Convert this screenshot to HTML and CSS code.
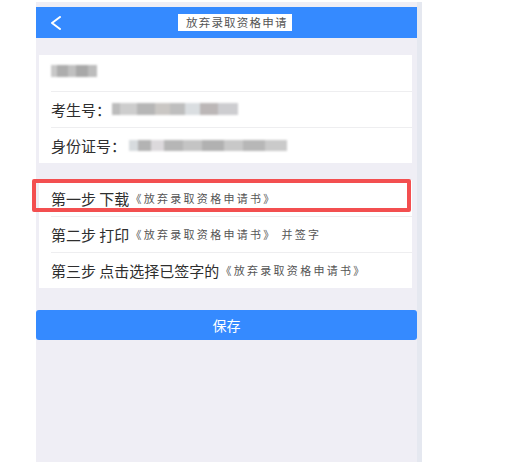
FILE: index.html
```html
<!DOCTYPE html>
<html lang="zh-CN">
<head>
<meta charset="utf-8">
<title>放弃录取资格申请</title>
<link rel="stylesheet" href="styles.css">
</head>
<body>
<div class="phone">
  <div class="screen">
    <header class="topbar">
      <span class="back">
        <svg width="12" height="14" viewBox="0 0 12 14"><path d="M10 1 L2 7 L10 13" fill="none" stroke="#fff" stroke-width="2" stroke-linecap="round" stroke-linejoin="round"/></svg>
      </span>
      <span class="title">放弃录取资格申请</span>
    </header>

    <section class="card">
      <div class="row"><span class="mosaic mosaic-name"></span></div>
      <div class="row"><span class="label">考生号：</span><span class="mosaic mosaic-no"></span></div>
      <div class="row"><span class="label">身份证号：</span><span class="mosaic mosaic-id"></span></div>
    </section>

    <section class="card steps">
      <div class="row"><span class="label">第一步 下载</span><span class="book">《放弃录取资格申请书》</span></div>
      <div class="row"><span class="label">第二步 打印</span><span class="book">《放弃录取资格申请书》 并签字</span></div>
      <div class="row"><span class="label">第三步 点击选择已签字的</span><span class="book">《放弃录取资格申请书》</span></div>
      <div class="highlight"></div>
    </section>

    <button class="save">保存</button>
  </div>
  <div class="strip"></div>
</div>
</body>
</html>
```

FILE: styles.css
```css
html, body {
  margin: 0;
  padding: 0;
  background: #ffffff;
}

body {
  font-family: "Noto Sans CJK SC", "Noto Sans", sans-serif;
  color: #333;
}

.phone {
  display: flex;
  margin: 2px 0 0 36px;
  width: 386px;
  height: 460px;
  background: #efeef5;
}

.screen {
  width: 381px;
  display: flex;
  flex-direction: column;
  padding-top: 5px;
}

.strip {
  width: 5px;
  background: #e5e8f0;
}

.topbar {
  height: 31px;
  background: #358aff;
  display: flex;
  align-items: center;
}

.back {
  display: flex;
  align-items: center;
  padding-left: 14px;
  width: 12px;
  height: 14px;
  margin-top: 1px;
}

.title {
  margin-left: 116px;
  background: #fff;
  height: 17px;
  width: 114px;
  box-sizing: border-box;
  padding-left: 8px;
  font-size: 11.5px;
  line-height: 17px;
  letter-spacing: 1.2px;
  color: #555;
  white-space: nowrap;
}

.card {
  margin: 17px 5px 0 3px;
  background: #fff;
  display: flex;
  flex-direction: column;
}

.row {
  height: 36px;
  display: flex;
  align-items: center;
  padding-left: 12px;
  position: relative;
  font-size: 15px;
  white-space: nowrap;
}

.row + .row::before {
  content: "";
  position: absolute;
  left: 12px;
  right: 0;
  top: 0;
  height: 1px;
  background: #eeeef0;
}

.label {
  color: #2e2e2e;
}

.mosaic {
  display: inline-block;
  height: 12px;
  filter: blur(1px);
}

.mosaic-name {
  width: 46px;
  margin-top: -4px;
  background: linear-gradient(90deg, #c8c8c8 0 12%, #adadad 12% 36%, #c0c0c0 36% 55%, #a8a8a8 55% 80%, #bcbcbc 80% 100%);
}

.mosaic-no {
  width: 126px;
  margin-left: 1px;
  background: linear-gradient(90deg, #bcbcbc 0 6%, #cdcdcd 6% 20%, #b6b6b6 20% 34%, #cac7c4 34% 46%, #bebebe 46% 58%, #dadee1 58% 70%, #bcb7b7 70% 84%, #cdcdd0 84% 100%);
}

.mosaic-id {
  width: 158px;
  margin-left: 3px;
  height: 11px;
  background: linear-gradient(90deg, #d7dbde 0 6%, #b3b3b3 6% 14%, #dcd9dc 14% 22%, #b6b6b6 22% 34%, #c4c4c4 34% 46%, #b1b1b1 46% 60%, #c8c8c8 60% 72%, #b7b7b7 72% 86%, #cacaca 86% 100%);
}

.book {
  font-size: 11px;
  letter-spacing: 2.3px;
  color: #555;
  margin-left: 1px;
}

.steps {
  position: relative;
}

.highlight {
  position: absolute;
  left: -7px;
  top: -1px;
  width: 379px;
  height: 33px;
  box-sizing: border-box;
  border: 4px solid #f34f50;
  border-radius: 2px;
}

.save {
  margin: 22px 0 0 0;
  height: 30px;
  border: none;
  border-radius: 3px;
  background: #358aff;
  color: #fff;
  font-family: "Noto Sans CJK SC", sans-serif;
  font-size: 14px;
  padding: 0;
  width: 381px;
}
```
